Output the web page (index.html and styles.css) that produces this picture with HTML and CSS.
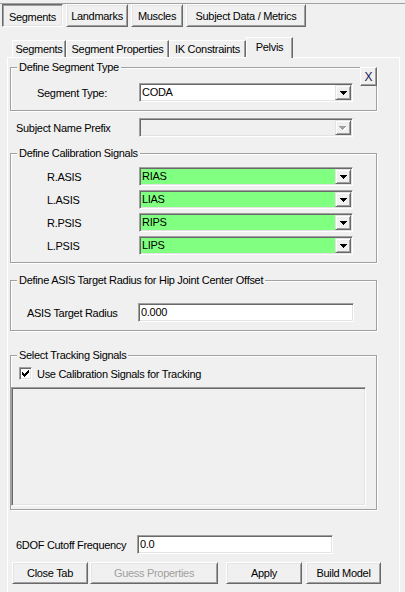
FILE: index.html
```html
<!DOCTYPE html>
<html>
<head>
<meta charset="utf-8">
<link rel="stylesheet" href="styles.css">
</head>
<body>
<div class="topline"></div>
<div class="toptabs">
  <div class="ttab on w-seg">Segments</div>
  <div class="ttab w-land">Landmarks</div>
  <div class="ttab w-mus">Muscles</div>
  <div class="ttab w-subj">Subject Data / Metrics</div>
</div>
<div class="itabs">
  <div class="itab w-iseg">Segments</div>
  <div class="itab w-iprop">Segment Properties</div>
  <div class="itab w-ik">IK Constraints</div>
  <div class="itab on w-pel">Pelvis</div>
</div>
<div class="panel">
  <div class="group g1">
    <div class="gtitle">Define Segment Type</div>
    <div class="row">
      <span class="lbl">Segment Type:</span>
      <div class="combo"><span class="val">CODA</span><span class="dd"><svg width="7" height="4" viewBox="0 0 7 4" shape-rendering="crispEdges"><path d="M0 0h7v1H0zM1 1h5v1H1zM2 2h3v1H2zM3 3h1v1H3z" fill="#000"/></svg></span></div>
    </div>
    <div class="xbtn">X</div>
  </div>

  <div class="row prefix">
    <span class="lbl">Subject Name Prefix</span>
    <div class="combo disabled"><span class="val"></span><span class="dd"><svg width="8" height="5" viewBox="0 0 8 5" shape-rendering="crispEdges"><path d="M1 1h7v1H1zM2 2h5v1H2zM3 3h3v1H3zM4 4h1v1H4z" fill="#fff"/><path d="M0 0h7v1H0zM1 1h5v1H1zM2 2h3v1H2zM3 3h1v1H3z" fill="#a0a0a0"/></svg></span></div>
  </div>

  <div class="group g2">
    <div class="gtitle">Define Calibration Signals</div>
    <div class="rows">
      <div class="row"><span class="lbl">R.ASIS</span><div class="combo green"><span class="val">RIAS</span><span class="dd"><svg width="7" height="4" viewBox="0 0 7 4" shape-rendering="crispEdges"><path d="M0 0h7v1H0zM1 1h5v1H1zM2 2h3v1H2zM3 3h1v1H3z" fill="#000"/></svg></span></div></div>
      <div class="row"><span class="lbl">L.ASIS</span><div class="combo green"><span class="val">LIAS</span><span class="dd"><svg width="7" height="4" viewBox="0 0 7 4" shape-rendering="crispEdges"><path d="M0 0h7v1H0zM1 1h5v1H1zM2 2h3v1H2zM3 3h1v1H3z" fill="#000"/></svg></span></div></div>
      <div class="row"><span class="lbl">R.PSIS</span><div class="combo green"><span class="val">RIPS</span><span class="dd"><svg width="7" height="4" viewBox="0 0 7 4" shape-rendering="crispEdges"><path d="M0 0h7v1H0zM1 1h5v1H1zM2 2h3v1H2zM3 3h1v1H3z" fill="#000"/></svg></span></div></div>
      <div class="row"><span class="lbl">L.PSIS</span><div class="combo green"><span class="val">LIPS</span><span class="dd"><svg width="7" height="4" viewBox="0 0 7 4" shape-rendering="crispEdges"><path d="M0 0h7v1H0zM1 1h5v1H1zM2 2h3v1H2zM3 3h1v1H3z" fill="#000"/></svg></span></div></div>
    </div>
  </div>

  <div class="group g3">
    <div class="gtitle">Define ASIS Target Radius for Hip Joint Center Offset</div>
    <div class="row">
      <span class="lbl">ASIS Target Radius</span>
      <div class="tbox w-asis">0.000</div>
    </div>
  </div>

  <div class="group g4">
    <div class="gtitle">Select Tracking Signals</div>
    <div class="chkrow">
      <span class="chk"><svg width="7" height="7" viewBox="0 0 7 7" shape-rendering="crispEdges"><path d="M6 0h1v1H6zM5 1h2v1H5zM0 2h1v1H0zM4 2h3v1H4zM0 3h2v1H0zM3 3h3v1H3zM0 4h5v1H0zM1 5h3v1H1zM2 6h1v1H2z" fill="#000"/></svg></span>
      <span class="chklbl">Use Calibration Signals for Tracking</span>
    </div>
    <div class="listbox"></div>
  </div>

  <div class="row freq">
    <span class="lbl">6DOF Cutoff Frequency</span>
    <div class="tbox w-freq">0.0</div>
  </div>

  <div class="btnrow">
    <div class="btn b-close">Close Tab</div>
    <div class="btn b-guess disabled">Guess Properties</div>
    <div class="btn b-apply">Apply</div>
    <div class="btn b-build">Build Model</div>
  </div>
</div>
</body>
</html>
```

FILE: styles.css
```css
html, body {
  margin: 0;
  padding: 0;
}
body {
  background: #f0f0f0;
  font-family: "Liberation Sans", Arial, sans-serif;
  font-size: 11px;
  letter-spacing: -0.3px;
  color: #000;
  width: 405px;
  height: 592px;
  overflow: hidden;
}

/* top button-style tabs */
.topline {
  margin-top: 3px;
  border-top: 1px solid #a0a0a0;
}
.toptabs {
  display: flex;
  gap: 3px;
  margin-left: 2px;
  height: 23px;
}
.ttab {
  height: 23px;
  box-sizing: border-box;
  display: flex;
  align-items: center;
  justify-content: center;
  border: 1px solid;
  border-color: #fff #696969 #696969 #fff;
  box-shadow: inset 1px 1px 0 #e3e3e3, inset -1px -1px 0 #a0a0a0;
}
.ttab.on {
  border-color: #696969 #fff #fff #696969;
  box-shadow: inset 1px 1px 0 #a0a0a0, inset -1px -1px 0 #e3e3e3;
  padding-top: 2px;
}
.w-seg { width: 61px; }
.w-land { width: 62px; }
.w-mus { width: 52px; }
.w-subj { width: 120px; }

/* inner tabs */
.itabs {
  display: flex;
  align-items: flex-end;
  margin: 10px 0 0 12px;
  height: 20px;
}
.itab {
  height: 17px;
  box-sizing: border-box;
  border-top: 1px solid #fff;
  border-left: 1px solid #fff;
  border-right: 1px solid #696969;
  box-shadow: inset -1px 0 0 #a0a0a0;
  display: flex;
  align-items: center;
  justify-content: center;
}
.itab.on {
  height: 21px;
  margin-bottom: -1px;
  background: #f0f0f0;
  position: relative;
  z-index: 1;
  padding-bottom: 3px;
}
.w-iseg { width: 54px; }
.w-iprop { width: 103px; }
.w-ik { width: 77px; }
.w-pel { width: 47px; }

/* panel */
.panel {
  margin-left: 7px;
  width: 393px;
  height: 560px;
  box-sizing: border-box;
  border-left: 1px solid #fff;
  border-top: 1px solid #fff;
  border-right: 1px solid #fff;
}

.group {
  margin-left: 2px;
  width: 367px;
  box-sizing: border-box;
  border: 1px solid #a0a0a0;
  box-shadow: inset 1px 1px 0 #fff, 1px 1px 0 #fff;
  position: relative;
}
.gtitle {
  margin: -8px 0 0 6px;
  padding: 0 2px;
  background: #f0f0f0;
  line-height: 14px;
  width: fit-content;
  position: relative;
}

.row {
  display: flex;
  align-items: center;
  height: 19px;
}
.lbl {
  flex: none;
  white-space: nowrap;
}

.combo {
  width: 214px;
  height: 19px;
  box-sizing: border-box;
  border: 1px solid;
  border-color: #a0a0a0 #fff #fff #a0a0a0;
  box-shadow: inset 1px 1px 0 #696969, inset -1px -1px 0 #e3e3e3;
  padding: 1px;
  background: #fff;
  display: flex;
  align-items: stretch;
}
.combo .val {
  flex: 1;
  padding-left: 1px;
  line-height: 15px;
}
.combo.green { background: #80ff80; }
.combo.disabled { background: #f0f0f0; }
.dd {
  width: 16px;
  box-sizing: border-box;
  background: #f0f0f0;
  border: 1px solid;
  border-color: #e3e3e3 #696969 #696969 #e3e3e3;
  box-shadow: inset 1px 1px 0 #fff, inset -1px -1px 0 #a0a0a0;
  display: flex;
  align-items: center;
  justify-content: center;
}
.dd svg { display: block; margin-top: 1px; }

.tbox {
  height: 19px;
  box-sizing: border-box;
  border: 1px solid;
  border-color: #a0a0a0 #fff #fff #a0a0a0;
  box-shadow: inset 1px 1px 0 #696969, inset -1px -1px 0 #e3e3e3;
  background: #fff;
  padding: 1px 2px;
  line-height: 15px;
}
.w-asis { width: 216px; }
.w-freq { width: 196px; }

/* group 1 */
.g1 {
  margin-top: 9px;
  padding-bottom: 8px;
}
.g1 .row {
  margin-top: 9px;
  padding-left: 26px;
}
.g1 .lbl { width: 102px; }
.xbtn {
  position: absolute;
  top: -1px;
  right: -1px;
  width: 17px;
  height: 19px;
  box-sizing: border-box;
  background: #f0f0f0;
  border: 1px solid;
  border-color: #fff #696969 #696969 #fff;
  box-shadow: inset -1px -1px 0 #a0a0a0;
  display: flex;
  align-items: center;
  justify-content: center;
  font-size: 12px;
  color: #1c1c50;
  letter-spacing: 0;
}

/* prefix */
.prefix {
  margin-top: 7px;
  padding-left: 8px;
}
.prefix .lbl { width: 123px; }

/* group 2 */
.g2 {
  margin-top: 16px;
  padding-bottom: 7px;
}
.g2 .rows {
  margin-top: 7px;
  display: flex;
  flex-direction: column;
  gap: 4px;
  padding-left: 36px;
}
.g2 .lbl { width: 92px; }

/* group 3 */
.g3 {
  margin-top: 17px;
  padding-bottom: 8px;
}
.g3 .row {
  margin-top: 16px;
  padding-left: 16px;
}
.g3 .lbl { width: 111px; }

/* group 4 */
.g4 {
  margin-top: 24px;
  padding-bottom: 3px;
}
.chkrow {
  margin-top: 5px;
  height: 13px;
  padding-left: 8px;
  display: flex;
  align-items: center;
}
.chk {
  width: 13px;
  height: 13px;
  box-sizing: border-box;
  border: 1px solid;
  border-color: #a0a0a0 #fff #fff #a0a0a0;
  box-shadow: inset 1px 1px 0 #696969, inset -1px -1px 0 #e3e3e3;
  background: #fff;
  display: flex;
  align-items: center;
  justify-content: center;
}
.chk svg { display: block; }
.chklbl { margin-left: 5px; }
.listbox {
  margin-top: 7px;
  width: 355px;
  height: 119px;
  box-sizing: border-box;
  border: 1px solid;
  border-color: #a0a0a0 #fff #fff #a0a0a0;
  box-shadow: inset 1px 1px 0 #696969, inset -1px -1px 0 #e3e3e3;
}

/* frequency */
.freq {
  margin-top: 25px;
  padding-left: 8px;
}
.freq .lbl { width: 121px; }

/* buttons */
.btnrow {
  margin-top: 8px;
  padding-left: 4px;
  display: flex;
  height: 22px;
}
.btn {
  height: 22px;
  box-sizing: border-box;
  border: 1px solid;
  border-color: #fff #696969 #696969 #fff;
  box-shadow: inset 1px 1px 0 #e3e3e3, inset -1px -1px 0 #a0a0a0;
  display: flex;
  align-items: center;
  justify-content: center;
}
.btn.disabled { color: #a0a0a0; }
.b-close { width: 76px; }
.b-guess { width: 128px; margin-left: 2px; }
.b-apply { width: 76px; margin-left: 8px; }
.b-build { width: 75px; margin-left: 4px; }
```
